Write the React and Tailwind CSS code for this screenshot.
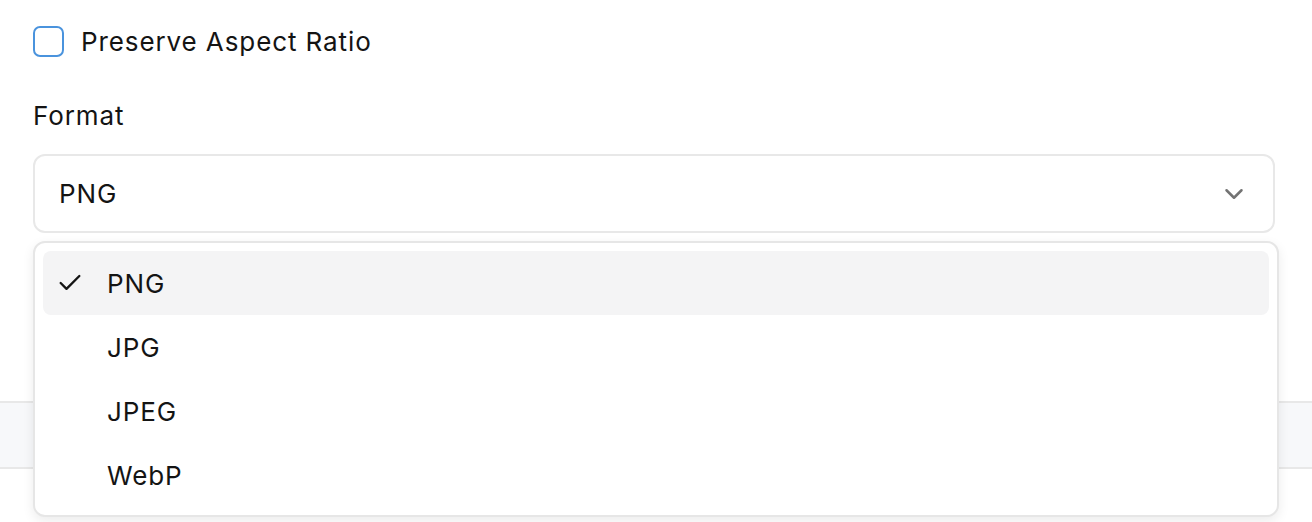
import { Check, ChevronDown } from 'lucide-react'

const options = ['PNG', 'JPG', 'JPEG', 'WebP']

export default function App() {
  const selected = 'PNG'

  return (
    <div className="relative w-[1312px] h-[522px] overflow-hidden bg-white text-[#141414] font-['Inter','Liberation_Sans',sans-serif] text-[26px] tracking-[0.9px]">
      <div className="px-[33px] pt-[26px]">
        <label className="flex items-center gap-[17px] h-[31px]">
          <span className="w-[31px] h-[31px] rounded-[7px] border-2 border-[#4a93dd] bg-white" />
          <span className="leading-none">Preserve Aspect Ratio</span>
        </label>

        <div className="mt-[44px] leading-[30px]">Format</div>

        <button className="mt-[23px] w-[1242px] h-[79px] rounded-[12px] border-2 border-[#e8e8e8] bg-white flex items-center justify-between pl-[24px] pr-[24px]">
          <span>{selected}</span>
          <ChevronDown size={30} strokeWidth={2} className="text-[#737373]" />
        </button>
      </div>

      <div className="mt-[168px] h-[68px] border-y-2 border-[#e8e8e8] bg-[#f7f8fa]" />

      <div className="absolute left-[33px] top-[241px] w-[1246px] rounded-[12px] border-2 border-[#e6e6e6] bg-white p-[8px] shadow-[0_4px_12px_rgba(0,0,0,0.08)]">
        {options.map((opt) => (
          <div
            key={opt}
            className={`flex items-center h-[64px] rounded-[8px] pl-[13px] ${opt === selected ? 'bg-[#f4f4f5]' : ''}`}
          >
            <span className="w-[28px] h-[28px] mr-[23px] flex items-center">
              {opt === selected && <Check size={28} strokeWidth={2} className="text-[#141414]" />}
            </span>
            <span>{opt}</span>
          </div>
        ))}
      </div>
    </div>
  )
}
